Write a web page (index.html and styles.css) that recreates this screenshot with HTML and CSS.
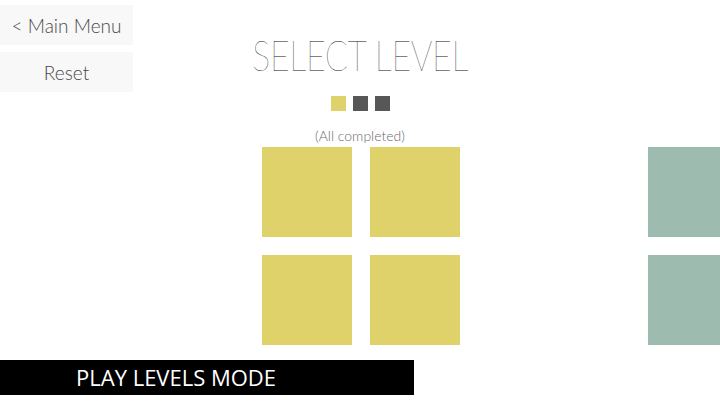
FILE: index.html
```html
<!DOCTYPE html>
<html>
<head>
<meta charset="utf-8">
<link rel="stylesheet" href="styles.css">
</head>
<body>
<div class="screen">
  <header class="top">
    <nav class="side">
      <div class="btn">&lt; Main Menu</div>
      <div class="btn">Reset</div>
    </nav>
    <div class="head-center">
      <h1 class="title">SELECT LEVEL</h1>
      <div class="dots">
        <span class="dot on"></span>
        <span class="dot"></span>
        <span class="dot"></span>
      </div>
      <div class="status">(All completed)</div>
    </div>
    <div class="side-spacer"></div>
  </header>
  <section class="carousel">
    <div class="page">
      <div class="tile yellow"></div>
      <div class="tile yellow"></div>
      <div class="tile yellow"></div>
      <div class="tile yellow"></div>
    </div>
    <div class="page">
      <div class="tile green"></div>
      <div class="tile green"></div>
      <div class="tile green"></div>
      <div class="tile green"></div>
    </div>
  </section>
  <footer class="mode-bar">PLAY LEVELS MODE</footer>
</div>
</body>
</html>
```

FILE: styles.css
```css
html, body {
  margin: 0;
  padding: 0;
  background: #ffffff;
  overflow: hidden;
}
.screen {
  width: 720px;
  height: 405px;
  display: flex;
  flex-direction: column;
  overflow: hidden;
}
.top {
  display: grid;
  grid-template-columns: 133px 1fr 133px;
  height: 147px;
}
.side {
  display: flex;
  flex-direction: column;
  gap: 7px;
  padding-top: 5px;
}
.btn {
  height: 40px;
  background: #f8f8f8;
  display: flex;
  align-items: center;
  justify-content: center;
  font-family: Lato, "Liberation Sans", sans-serif;
  font-weight: 300;
  font-size: 19px;
  color: #4a4a4a;
}
.head-center {
  display: flex;
  flex-direction: column;
  align-items: center;
}
.title {
  margin: 0;
  margin-top: 32px;
  font-family: Lato, "Liberation Sans", sans-serif;
  font-weight: 100;
  font-size: 42px;
  line-height: 46px;
  letter-spacing: -0.5px;
  color: #111;
  transform: scaleX(0.81);
}
.dots {
  display: flex;
  gap: 7px;
  margin-top: 18px;
}
.dot {
  width: 15px;
  height: 15px;
  background: #575757;
}
.dot.on {
  background: #e0d26a;
}
.status {
  margin-top: 17px;
  font-family: Lato, "Liberation Sans", sans-serif;
  font-weight: 300;
  font-size: 14px;
  line-height: 16px;
  color: #6a6a6a;
}
.carousel {
  display: flex;
  gap: 188px;
  padding-left: 262px;
  height: 198px;
}
.page {
  display: grid;
  grid-template-columns: 90px 90px;
  grid-auto-rows: 90px;
  gap: 18px;
  flex: none;
}
.tile.yellow {
  background: #e0d26a;
}
.tile.green {
  background: #9dbcaf;
}
.mode-bar {
  margin-top: 15px;
  width: 414px;
  height: 35px;
  background: #000;
  color: #fff;
  font-family: "Open Sans", sans-serif;
  font-size: 22px;
  line-height: 35px;
  padding-left: 76px;
  box-sizing: border-box;
}
```
